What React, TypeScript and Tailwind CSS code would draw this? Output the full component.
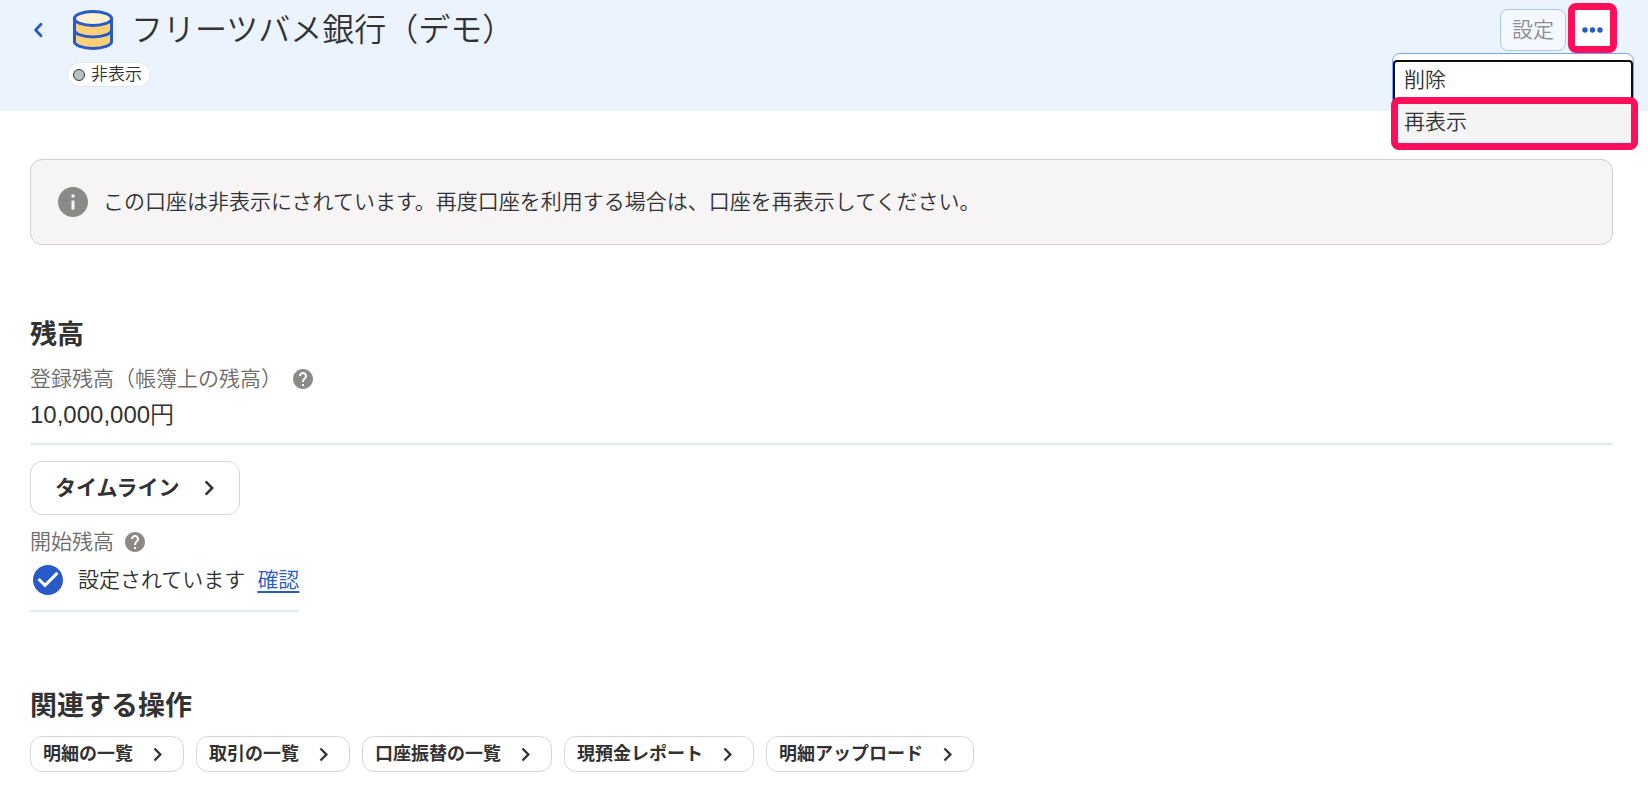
import React from 'react'

import {
  MdCheckCircle,
  MdChevronRight,
  MdHelp,
  MdInfo,
} from 'react-icons/md'

const operations = [
  '明細の一覧',
  '取引の一覧',
  '口座振替の一覧',
  '現預金レポート',
  '明細アップロード',
]

const BackIcon: React.FC = () => (
  <svg width="10" height="16" viewBox="0 0 10 16" fill="none" aria-hidden="true">
    <path
      d="M8 2.300L2.600 8l5.400 5.700"
      stroke="#285ac8"
      strokeWidth="2.800"
      strokeLinecap="round"
      strokeLinejoin="round"
    />
  </svg>
)

const BankIcon: React.FC = () => (
  <svg width="40" height="40" viewBox="0 0 40 40" aria-hidden="true">
    <g stroke="#285ac8" strokeWidth="3">
      <path
        d="M1.500 8.500v23c0 3.900 8.300 7 18.500 7s18.500-3.100 18.500-7v-23z"
        fill="#ffd078"
      />
      <ellipse cx="20" cy="8.500" rx="18.500" ry="7" fill="#fff0d2" />
      <path
        d="M1.500 20c0 3.900 8.300 7 18.500 7s18.500-3.100 18.500-7"
        fill="none"
      />
    </g>
  </svg>
)

const MoreIcon: React.FC = () => (
  <svg width="21" height="6" viewBox="0 0 21 6" fill="#285ac8" aria-hidden="true">
    <circle cx="3" cy="3" r="2.700" />
    <circle cx="10.500" cy="3" r="2.700" />
    <circle cx="18" cy="3" r="2.700" />
  </svg>
)

const HelpButton: React.FC<{ label: string }> = ({ label }) => (
  <button type="button" aria-label={label} className="text-[#8c8989]">
    <MdHelp size={24} />
  </button>
)

const Header: React.FC = () => (
  <header className="relative bg-[#ebf3ff] pb-6">
    <div className="flex h-[60px] items-center pl-[33px] pr-[38px]">
      <button type="button" aria-label="戻る">
        <BackIcon />
      </button>
      <div className="ml-[30px]">
        <BankIcon />
      </div>
      <h1 className="ml-[18px] flex-1 text-[32px] leading-10">
        フリーツバメ銀行（デモ）
      </h1>
      <button
        type="button"
        disabled
        className="h-[42px] rounded-lg border border-[#aac8ff] bg-[#f5f9ff] px-[11px] text-[#8c8c96]"
      >
        設定
      </button>
      <div className="relative ml-[9px]">
        <button
          type="button"
          aria-label="メニュー"
          aria-expanded="true"
          className="flex h-10 w-[35px] items-center justify-center bg-white"
        >
          <MoreIcon />
        </button>
        <div className="pointer-events-none absolute -inset-x-[7px] -bottom-[3px] -top-[7px] rounded-lg border-[7px] border-[#ff0f5a]" />
      </div>
    </div>
    <div className="flex pl-[67px] pt-[2px]">
      <span className="flex h-[25px] items-center gap-[6px] rounded-full border border-[#e1e6e6] bg-white pl-[5px] pr-2 text-[17px]">
        <span className="h-3 w-3 rounded-full border border-[#323232] bg-[#b4c3c3]" />
        非表示
      </span>
    </div>

    <div
      role="menu"
      className="absolute right-[14px] top-[53px] w-[242px] rounded-lg border border-[#73a5ff] bg-white pb-[6px] pt-[6px]"
    >
      <button
        type="button"
        role="menuitem"
        className="block h-[42px] w-full rounded-sm border-2 border-[#0f0f0f] px-[9px] pb-[3px] text-left leading-8"
      >
        削除
      </button>
      <div className="relative">
        <button
          type="button"
          role="menuitem"
          className="block h-[41px] w-full bg-[#f4f4f4] px-[11px] pb-[2px] text-left leading-8"
        >
          再表示
        </button>
        <div className="pointer-events-none absolute -bottom-[7px] -left-[2px] -right-[5px] -top-[5px] rounded-lg border-[7px] border-[#ff0f5a]" />
      </div>
    </div>
  </header>
)

const App: React.FC = () => {
  return (
    <div className="bg-white font-['Liberation_Sans','Noto_Sans_CJK_JP',sans-serif] text-[21px] font-[350] leading-8 text-[#323232]">
      <Header />
      <main className="pb-[30px] pl-[30px] pr-[35px] pt-12">
        <div className="flex h-[86px] items-center gap-3 rounded-xl border border-[#d2cfd0] bg-[#f6f4f5] pl-6">
          <MdInfo size={36} className="shrink-0 text-[#8c8989]" />
          <p>
            この口座は非表示にされています。再度口座を利用する場合は、口座を再表示してください。
          </p>
        </div>

        <section className="pt-[70px]">
          <h2 className="text-[27px] font-bold leading-10">残高</h2>
          <dl className="border-b-2 border-[#e4e9e9] pb-[10px] pt-2">
            <dt className="flex items-center gap-[9px] text-[#6e6b6b]">
              登録残高（帳簿上の残高）
              <HelpButton label="登録残高について" />
            </dt>
            <dd className="mt-[2px] text-2xl leading-9">10,000,000円</dd>
          </dl>
          <a
            href="#timeline"
            className="mt-4 inline-flex h-[54px] items-center gap-[14px] rounded-xl border border-[#d7d7d7] pl-6 pr-[15px] font-bold"
          >
            タイムライン
            <MdChevronRight size={30} />
          </a>
          <div className="mt-[11px] flex items-center gap-[9px] text-[#6e6b6b]">
            開始残高
            <HelpButton label="開始残高について" />
          </div>
          <div className="flex">
            <div className="flex items-center border-b-2 border-[#e4e9e9] pb-3 pt-1">
              <MdCheckCircle size={36} className="text-[#285ac8]" />
              <span className="ml-3">設定されています</span>
              <a
                href="#confirm"
                className="ml-3 text-[#285ac8] underline decoration-2 underline-offset-4"
              >
                確認
              </a>
            </div>
          </div>
        </section>

        <section className="pt-[74px]">
          <h2 className="text-[27px] font-bold leading-10">関連する操作</h2>
          <nav className="mt-[10px] flex flex-wrap gap-3">
            {operations.map(label => (
              <a
                key={label}
                href="#operation"
                className="flex h-9 items-center gap-[11px] rounded-xl border border-[#d7d7d7] px-3 text-lg font-bold"
              >
                {label}
                <MdChevronRight size={27} />
              </a>
            ))}
          </nav>
        </section>
      </main>
    </div>
  )
}

export default App
